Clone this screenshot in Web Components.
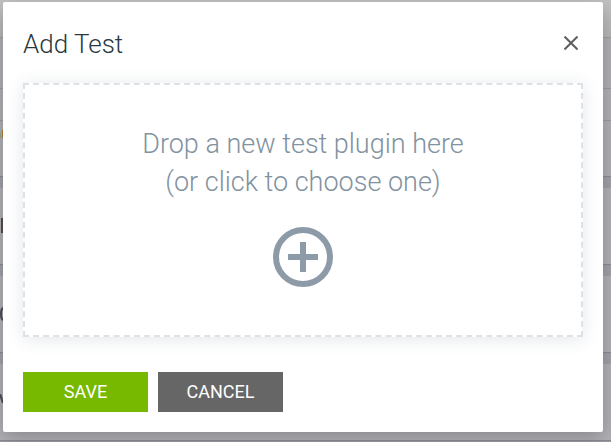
<!DOCTYPE html>
<html lang="en">
<head>
<meta charset="utf-8">
<title>Add Test</title>
<style>
  html, body { margin: 0; min-height: 100%; }
  body { font-family: Roboto, "Liberation Sans", sans-serif; background: #a6a6ab; }
</style>
</head>
<body>
<test-page>
  <modal-dialog heading="Add Test">
    <drop-zone>Drop a new test plugin here<br>(or click to choose one)</drop-zone>
    <action-button slot="actions" variant="primary">SAVE</action-button>
    <action-button slot="actions">CANCEL</action-button>
  </modal-dialog>
</test-page>

<script>
  const define = (name, html, setup) => {
    const template = document.createElement('template');
    template.innerHTML = html;
    customElements.define(name, class extends HTMLElement {
      constructor() {
        super();
        this.attachShadow({ mode: 'open' }).append(template.content.cloneNode(true));
      }
      connectedCallback() { if (setup) setup(this, this.shadowRoot); }
    });
  };

  define('page-row', `
    <style>
      :host { display: flex; align-items: center; box-sizing: border-box; height: 76px; background: #b0b0b5; box-shadow: 0 1px 1px #8c8d93; }
    </style>
    <slot></slot>`);

  define('test-page', `
    <style>
      :host { display: grid; min-height: 100vh; overflow: hidden; }
      .backdrop, .stage { grid-area: 1 / 1; min-width: 0; }
      .backdrop { display: flex; flex-direction: column; gap: 12px; height: 100vh; overflow: hidden; background: #9fa1a7; }
      .top { display: grid; grid-template-rows: 38px 51px 32px 55px; flex: none; background: #afafb4; box-shadow: 0 1px 1px #8c8d93; }
      .top > div { box-sizing: border-box; border-bottom: 1px solid #9b9ba2; }
      .top > .bar { background: linear-gradient(#c2c2c2, #b6b6b8); }
      .top > .last { border: 0; display: flex; align-items: start; padding-top: 8px; }
      page-row { flex: none; }
      svg { display: block; width: 3px; height: 16px; }
      .stage { position: relative; padding: 2px 8px 10px 3px; }
    </style>
    <div class="backdrop" aria-hidden="true">
      <div class="top">
        <div class="bar"></div><div></div><div></div>
        <div class="last"><svg viewBox="0 0 3 16"><path d="M0 4h1v5H0z" fill="#8fa9a5"/><path d="M2 1h1v8H2z" fill="#bd7f32"/></svg></div>
      </div>
      <page-row><svg viewBox="0 0 3 16"><path d="M1 0h2v15H1z" fill="#5b4c4b"/></svg></page-row>
      <page-row><svg viewBox="0 0 3 16"><path d="M3 2Q1 3 1 8t2 6" fill="none" stroke="#4b4b5c" stroke-width="2"/></svg></page-row>
      <page-row><svg viewBox="0 0 3 16"><path d="M0 0l3 9" fill="none" stroke="#4b4b5c" stroke-width="2"/></svg></page-row>
    </div>
    <div class="stage"><slot></slot></div>`);

  define('modal-dialog', `
    <style>
      :host { display: block; box-sizing: border-box; padding: 20px; background: #fff; color: #2b383f; border-radius: 2px; box-shadow: 0 6px 20px rgba(0,0,0,.22); }
      header { display: flex; align-items: center; justify-content: space-between; height: 42px; margin-bottom: 19px; }
      h2 { margin: 0; padding-top: 2px; font-size: 26px; line-height: 42px; font-weight: 300; }
      button { display: grid; place-items: center; width: 24px; height: 24px; padding: 0; border: 0; background: none; color: #5e5e5e; cursor: pointer; }
      svg { display: block; width: 14px; height: 14px; }
      footer { display: flex; flex-wrap: wrap; gap: 10px; margin-top: 35px; }
    </style>
    <section role="dialog" aria-labelledby="title">
      <header>
        <h2 id="title"></h2>
        <button type="button" aria-label="Close"><svg viewBox="0 0 14 14" fill="none" stroke="currentColor" stroke-width="2"><path d="M.5.5l13 13M13.5.5l-13 13"/></svg></button>
      </header>
      <slot></slot>
      <footer><slot name="actions"></slot></footer>
    </section>`, (host, root) => {
      root.querySelector('h2').textContent = host.getAttribute('heading');
    });

  define('drop-zone', `
    <style>
      :host { display: block; color: #8c9ba7; }
      button { display: flex; flex-direction: column; align-items: center; gap: 26px; box-sizing: border-box; width: 100%; padding: 40px 20px 48px; border: 2px dashed #dfe1e5; background: #fff; color: inherit; font: 300 27px/38px Roboto, "Liberation Sans", sans-serif; box-shadow: 0 2px 16px rgba(75,100,125,.16); cursor: pointer; }
      span { color: #82929f; }
      svg { display: block; width: 60px; height: 60px; }
      input { display: none; }
    </style>
    <button type="button">
      <span><slot></slot></span>
      <svg viewBox="0 0 60 60" fill="none" stroke="currentColor" stroke-width="6" aria-hidden="true"><circle cx="30" cy="30" r="27"/><path d="M30 15v30M15 30h30"/></svg>
    </button>
    <input type="file" aria-label="Test plugin">`, (host, root) => {
      root.querySelector('button').onclick = () => root.querySelector('input').click();
    });

  define('action-button', `
    <style>
      :host { display: block; }
      button { min-width: 125px; height: 40px; padding: 0 16px; border: 0; background: #666; color: #fff; font: 400 18px/40px Roboto, "Liberation Sans", sans-serif; cursor: pointer; }
      :host([variant="primary"]) button { background: #76b900; }
    </style>
    <button type="button"><slot></slot></button>`);
</script>
</body>
</html>
